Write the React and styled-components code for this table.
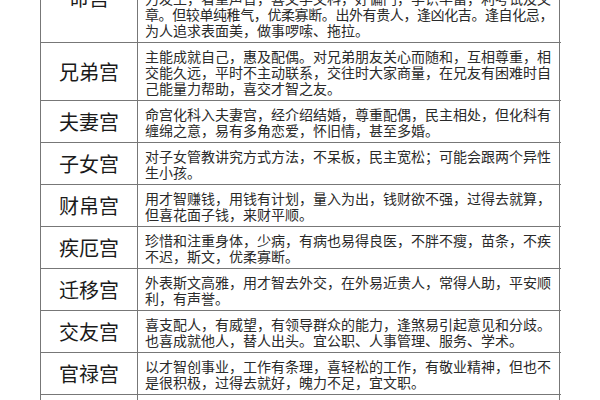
import React from "react";
import styled, { createGlobalStyle } from "styled-components";

const GlobalStyle = createGlobalStyle`
  html, body {
    margin: 0;
    padding: 0;
    background: #fff;
  }
  body {
    width: 600px;
    height: 400px;
    overflow: hidden;
    font-family: "Noto Sans CJK SC", "Noto Sans", sans-serif;
  }
`;

const Page = styled.div`
  width: 600px;
  height: 400px;
  overflow: hidden;
  background: #fff;
`;

const Table = styled.div`
  margin: -47px 0 0 40px;
  width: 520px;
  border-left: 1px solid #777;
  display: flex;
  flex-direction: column;
`;

const Row = styled.div`
  display: grid;
  grid-template-columns: 97px 422px;
  border-bottom: 1px solid #777;
`;

const Name = styled.div`
  display: flex;
  align-items: center;
  justify-content: center;
  border-right: 1px solid #777;
  font-size: 20px;
  color: #1a1a1a;
  letter-spacing: 0;
`;

const Desc = styled.div`
  border-right: 1px solid #777;
  padding: 5px 0 4px 7px;
  font-size: 14px;
  line-height: 16px;
  color: #2a2a2a;
`;

const Line = styled.span`
  display: block;
  white-space: nowrap;
  letter-spacing: ${(p) => (p.$tight ? "-0.4px" : "0")};
`;

const rows = [
  {
    name: "命宫",
    lines: [
      "命宫化科：为人聪明，文质彬彬，气质高雅，举止斯文，有才艺，",
      "重名誉，有修养，处事有条理，温和善良，人缘佳，有领悟力，魅",
      "力发生，看重声音，喜文学文科，好偏门，学识丰富，利考试及文",
      "章。但较单纯稚气，优柔寡断。出外有贵人，逢凶化吉。逢自化忌，",
      "为人追求表面美，做事啰嗦、拖拉。",
    ],
    tight: 3,
  },
  {
    name: "兄弟宫",
    lines: [
      "主能成就自己，惠及配偶。对兄弟朋友关心而随和，互相尊重，相",
      "交能久远，平时不主动联系，交往时大家商量，在兄友有困难时自",
      "己能量力帮助，喜交才智之友。",
    ],
  },
  {
    name: "夫妻宫",
    lines: [
      "命宫化科入夫妻宫，经介绍结婚，尊重配偶，民主相处，但化科有",
      "缠绵之意，易有多角恋爱，怀旧情，甚至多婚。",
    ],
  },
  {
    name: "子女宫",
    lines: [
      "对子女管教讲究方式方法，不呆板，民主宽松；可能会跟两个异性",
      "生小孩。",
    ],
  },
  {
    name: "财帛宫",
    lines: [
      "用才智赚钱，用钱有计划，量入为出，钱财欲不强，过得去就算，",
      "但喜花面子钱，来财平顺。",
    ],
  },
  {
    name: "疾厄宫",
    lines: [
      "珍惜和注重身体，少病，有病也易得良医，不胖不瘦，苗条，不疾",
      "不迟，斯文，优柔寡断。",
    ],
  },
  {
    name: "迁移宫",
    lines: [
      "外表斯文高雅，用才智去外交，在外易近贵人，常得人助，平安顺",
      "利，有声誉。",
    ],
  },
  {
    name: "交友宫",
    lines: [
      "喜支配人，有威望，有领导群众的能力，逢煞易引起意见和分歧。",
      "也喜成就他人，替人出头。宜公职、人事管理、服务、学术。",
    ],
  },
  {
    name: "官禄宫",
    lines: [
      "以才智创事业，工作有条理，喜轻松的工作，有敬业精神，但也不",
      "是很积极，过得去就好，魄力不足，宜文职。",
    ],
  },
  {
    name: "田宅宫",
    lines: [
      "置产有计划，重视居家环境，住宅整洁雅致，喜书香门第之家。",
      "家庭和睦，长辈关照。",
    ],
  },
];

const App = () => {
  return (
    <Page>
      <GlobalStyle />
      <Table>
        {rows.map((row) => (
          <Row key={row.name}>
            <Name>{row.name}</Name>
            <Desc>
              {row.lines.map((line, i) => (
                <Line key={i} $tight={row.tight === i}>
                  {line}
                </Line>
              ))}
            </Desc>
          </Row>
        ))}
      </Table>
    </Page>
  );
};

export default App;
